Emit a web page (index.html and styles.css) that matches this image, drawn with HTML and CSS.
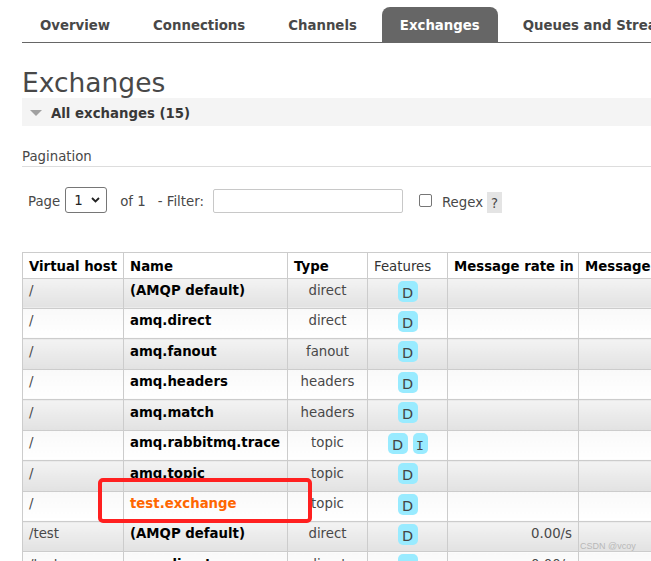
FILE: index.html
```html
<!DOCTYPE html>
<html lang="en">
<head>
<meta charset="utf-8">
<title>Exchanges</title>
<link rel="stylesheet" href="styles.css">
</head>
<body>
<nav class="menu">
  <a class="tab">Overview</a>
  <a class="tab">Connections</a>
  <a class="tab">Channels</a>
  <a class="tab active">Exchanges</a>
  <a class="tab">Queues and Streams</a>
  <a class="tab">Admin</a>
</nav>
<main class="main">
  <h1 class="title">Exchanges</h1>
  <div class="section-head"><span class="tri"></span><span class="section-label">All exchanges (15)</span></div>
  <h3 class="sub">Pagination</h3>
  <div class="pager">
    <span class="lbl">Page</span>
    <span class="select"><span class="select-val">1</span><svg class="chev" width="9" height="6" viewBox="0 0 9 6"><path d="M1 1 L4.5 4.5 L8 1" fill="none" stroke="#222" stroke-width="1.8"/></svg></span>
    <span class="lbl of">of 1</span>
    <span class="lbl filter">- Filter:</span>
    <input class="filter-input" type="text">
    <input class="check" type="checkbox">
    <span class="lbl regex">Regex</span>
    <span class="help">?</span>
  </div>
  <table class="list">
    <colgroup>
      <col class="c-vh"><col class="c-name"><col class="c-type"><col class="c-feat"><col class="c-rate"><col class="c-msg">
    </colgroup>
    <thead>
      <tr>
        <th>Virtual host</th><th>Name</th><th>Type</th><th class="plain">Features</th><th>Message rate in</th><th>Message rate out</th>
      </tr>
    </thead>
    <tbody>
      <tr class="alt1"><td>/</td><td class="name">(AMQP default)</td><td class="type">direct</td><td class="feat"><span class="badges"><span class="badge">D</span></span></td><td class="rate"></td><td class="rate"></td></tr>
      <tr class="alt2"><td>/</td><td class="name">amq.direct</td><td class="type">direct</td><td class="feat"><span class="badges"><span class="badge">D</span></span></td><td class="rate"></td><td class="rate"></td></tr>
      <tr class="alt1"><td>/</td><td class="name">amq.fanout</td><td class="type">fanout</td><td class="feat"><span class="badges"><span class="badge">D</span></span></td><td class="rate"></td><td class="rate"></td></tr>
      <tr class="alt2"><td>/</td><td class="name">amq.headers</td><td class="type">headers</td><td class="feat"><span class="badges"><span class="badge">D</span></span></td><td class="rate"></td><td class="rate"></td></tr>
      <tr class="alt1"><td>/</td><td class="name">amq.match</td><td class="type">headers</td><td class="feat"><span class="badges"><span class="badge">D</span></span></td><td class="rate"></td><td class="rate"></td></tr>
      <tr class="alt2"><td>/</td><td class="name">amq.rabbitmq.trace</td><td class="type">topic</td><td class="feat"><span class="badges"><span class="badge">D</span><span class="badge narrow">I</span></span></td><td class="rate"></td><td class="rate"></td></tr>
      <tr class="alt1"><td>/</td><td class="name">amq.topic</td><td class="type">topic</td><td class="feat"><span class="badges"><span class="badge">D</span></span></td><td class="rate"></td><td class="rate"></td></tr>
      <tr class="alt2"><td>/</td><td class="name hl">test.exchange</td><td class="type">topic</td><td class="feat"><span class="badges"><span class="badge">D</span></span></td><td class="rate"></td><td class="rate"></td></tr>
      <tr class="alt1"><td>/test</td><td class="name">(AMQP default)</td><td class="type">direct</td><td class="feat"><span class="badges"><span class="badge">D</span></span></td><td class="rate">0.00/s</td><td class="rate"></td></tr>
      <tr class="alt2"><td>/test</td><td class="name">amq.direct</td><td class="type">direct</td><td class="feat"><span class="badges"><span class="badge">D</span></span></td><td class="rate">0.00/s</td><td class="rate"></td></tr>
      <tr class="alt1"><td>/test</td><td class="name">amq.fanout</td><td class="type">fanout</td><td class="feat"><span class="badges"><span class="badge">D</span></span></td><td class="rate">0.00/s</td><td class="rate"></td></tr>
    </tbody>
  </table>
</main>
<div class="annot"></div>
<div class="wm">CSDN @vcoy</div>
</body>
</html>
```

FILE: styles.css
```css
html, body {
  overflow: hidden;
}
body {
  margin: 0;
  background: #fff;
  font-family: "DejaVu Sans", Verdana, sans-serif;
  font-size: 13.3px;
  color: #484848;
  position: relative;
  min-height: 561px;
}

/* nav */
.menu {
  display: flex;
  flex-wrap: nowrap;
  gap: 7px;
  margin: 7px 0 0 22px;
  border-bottom: 1px solid #666;
  white-space: nowrap;
}
.tab {
  display: block;
  flex: none;
  box-sizing: border-box;
  height: 35px;
  line-height: 35px;
  padding: 1px 18px 0;
  font-weight: bold;
  font-size: 13.3px;
  color: #484848;
  border-radius: 8px 8px 0 0;
}
.tab.active {
  background: #666;
  color: #fff;
}

/* main */
.main {
  padding-left: 22px;
}
.title {
  margin: 24px 0 0;
  font-size: 26.5px;
  font-weight: normal;
  line-height: 31px;
  color: #484848;
}
.section-head {
  display: flex;
  align-items: center;
  gap: 9px;
  height: 28px;
  padding-left: 8px;
  background: #f4f4f4;
}
.tri {
  width: 0;
  height: 0;
  margin-top: 2px;
  border-left: 6px solid transparent;
  border-right: 6px solid transparent;
  border-top: 6px solid #a0a0a0;
}
.section-label {
  font-weight: bold;
  color: #383838;
  padding-top: 2px;
}
.sub {
  margin: 23px 0 0;
  padding-bottom: 1px;
  font-size: 13.3px;
  font-weight: normal;
  line-height: 15.5px;
  border-bottom: 1px solid #ddd;
}

/* pager */
.pager {
  display: flex;
  align-items: flex-start;
  height: 26px;
  margin-top: 20px;
  padding-left: 6px;
}
.lbl {
  line-height: 26px;
  padding-top: 2px;
}
.select {
  display: flex;
  align-items: center;
  box-sizing: border-box;
  width: 42px;
  height: 26px;
  margin-left: 5px;
  padding: 0 0 0 8px;
  border: 1px solid #767676;
  border-radius: 3px;
  color: #222;
}
.select-val {
  line-height: 24px;
  padding-top: 2px;
  width: 17px;
}
.chev {
  display: block;
}
.of {
  margin-left: 13px;
}
.filter {
  margin-left: 12px;
}
.filter-input {
  box-sizing: border-box;
  width: 190px;
  height: 24px;
  margin: 2px 0 0 9px;
  padding: 0;
  border: 1px solid #c8c8c8;
  border-radius: 2px;
  background: #fff;
}
.check {
  appearance: none;
  -webkit-appearance: none;
  box-sizing: border-box;
  width: 13px;
  height: 13px;
  margin: 7px 0 0 16px;
  border: 1px solid #767676;
  border-radius: 2px;
  background: #fff;
}
.regex {
  margin-left: 10px;
  padding-top: 3px;
}
.help {
  box-sizing: border-box;
  width: 15px;
  height: 21px;
  margin: 5px 0 0 4px;
  background: #e4e4e4;
  text-align: center;
  line-height: 21px;
  padding-top: 1px;
}

/* table */
.list {
  margin-top: 39px;
  border-collapse: collapse;
  table-layout: fixed;
  width: 679px;
}
.c-vh { width: 101px; }
.c-name { width: 164px; }
.c-type { width: 80px; }
.c-feat { width: 80px; }
.c-rate { width: 131px; }
.c-msg { width: 123px; }
.list th, .list td {
  border: 1px solid #ccc;
  white-space: nowrap;
  overflow: hidden;
}
.list th {
  padding: 6px 6px 3.5px;
  line-height: 15.5px;
  text-align: left;
  font-weight: bold;
  color: #000;
  background: #fff;
}
.list th.plain {
  font-weight: normal;
  color: #333;
}
.list td {
  box-sizing: content-box;
  height: 25px;
  padding: 4.44px 6px 0;
  line-height: 15.5px;
  vertical-align: top;
  color: #484848;
}
.list tr.alt1 td {
  background: linear-gradient(#f3f3f3, #e2e2e2);
}
.list tr.alt2 td {
  background: linear-gradient(#f9f9f9, #fff);
}
.list td.name {
  font-weight: bold;
  color: #000;
}
.list td.name.hl {
  color: #ff6600;
}
.list td.type {
  text-align: center;
}
.list td.feat {
  padding-top: 2px;
  height: 27.44px;
}
.list td.rate {
  text-align: right;
}
.badges {
  display: flex;
  justify-content: center;
  gap: 5px;
}
.badge {
  display: block;
  box-sizing: border-box;
  width: 20px;
  height: 21px;
  padding-top: 4px;
  line-height: 17px;
  font-size: 14.5px;
  text-align: center;
  background: #99ebff;
  border-radius: 5px;
  color: #444;
}
.badge.narrow {
  width: 15px;
  font-family: "DejaVu Sans Mono", monospace;
  font-size: 13px;
}

/* overlays */
.annot {
  position: absolute;
  left: 98px;
  top: 478px;
  width: 214px;
  height: 45px;
  box-sizing: border-box;
  border: 4px solid #ff2020;
  border-radius: 5px;
}
.wm {
  position: absolute;
  left: 580px;
  top: 541px;
  font-family: "Liberation Sans", Arial, sans-serif;
  font-size: 9px;
  color: #b8b8b8;
  white-space: nowrap;
}
```
